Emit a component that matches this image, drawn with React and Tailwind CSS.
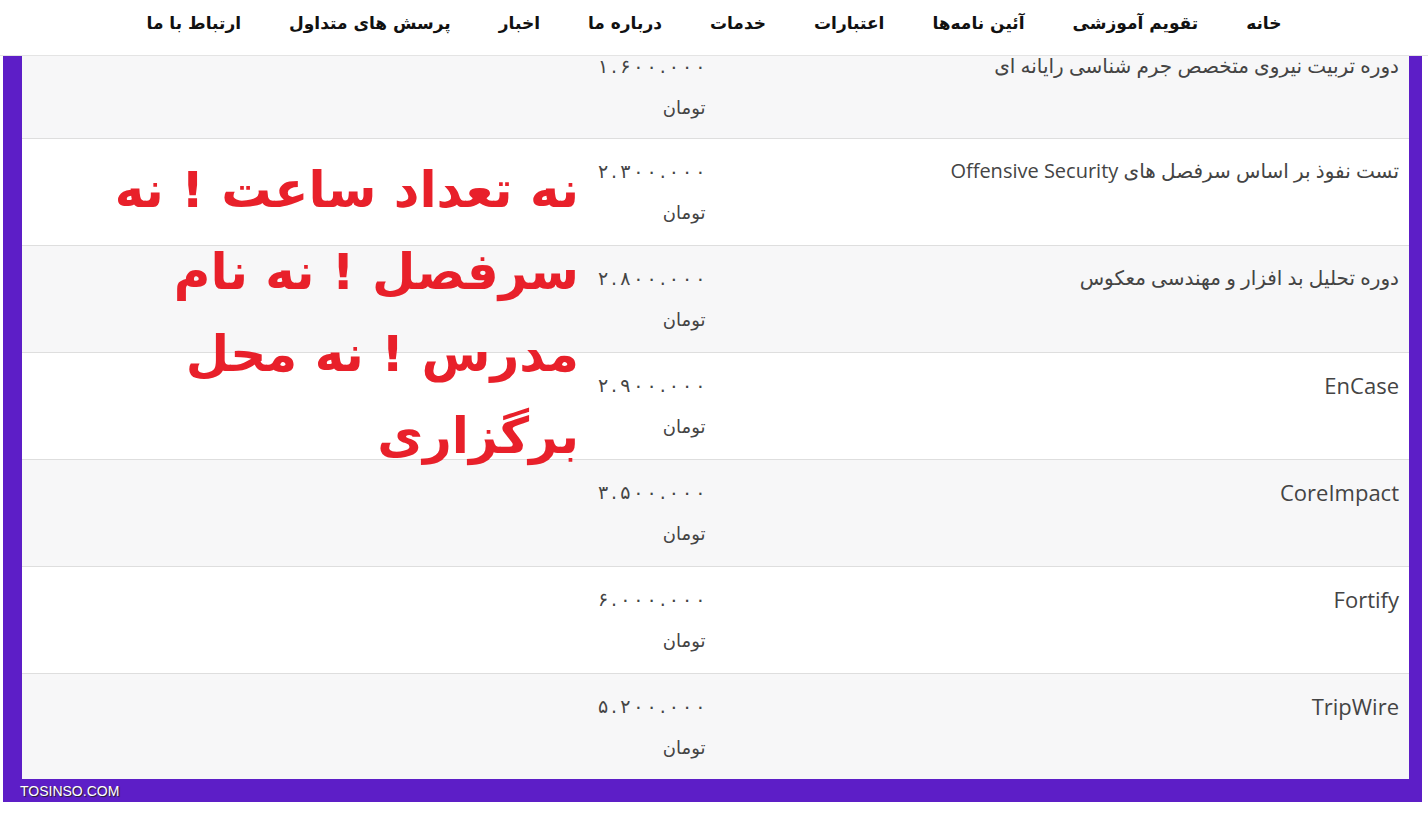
const navItems = [
  'خانه',
  'تقویم آموزشی',
  'آئین نامه‌ها',
  'اعتبارات',
  'خدمات',
  'درباره ما',
  'اخبار',
  'پرسش های متداول',
  'ارتباط با ما',
];

const courses = [
  { name: 'دوره تربیت نیروی متخصص جرم شناسی رایانه ای', price: '۱.۶۰۰.۰۰۰' },
  { name: 'تست نفوذ بر اساس سرفصل های Offensive Security', price: '۲.۳۰۰.۰۰۰' },
  { name: 'دوره تحلیل بد افزار و مهندسی معکوس', price: '۲.۸۰۰.۰۰۰' },
  { name: 'EnCase', price: '۲.۹۰۰.۰۰۰', latin: true },
  { name: 'CoreImpact', price: '۳.۵۰۰.۰۰۰', latin: true },
  { name: 'Fortify', price: '۶.۰۰۰.۰۰۰', latin: true },
  { name: 'TripWire', price: '۵.۲۰۰.۰۰۰', latin: true },
];

function CourseRow({ course, index }) {
  const bg = index % 2 === 0 ? 'bg-[#f7f7f8]' : 'bg-white';
  const height = index === 0 ? 'h-[105px]' : 'h-[107px]';
  return (
    <div className={`flex ${height} border-b border-[#dedede] ${bg}`}>
      <div className="w-1/2 pr-[10px] pt-[18px]">
        <p
          className={
            course.latin
              ? "text-[22px] leading-[28px] text-[#444] font-['Open_Sans',sans-serif]"
              : "text-[20px] leading-[28px] text-[#444] font-['Open_Sans','DejaVu_Sans',sans-serif]"
          }
        >
          {course.name}
        </p>
      </div>
      <div className="w-1/2 pr-[10px] pt-[18px] text-[#444]">
        <p dir="ltr" className="flex justify-end gap-[3px] text-[19px] leading-[28px]">
          {[...course.price].map((ch, i) => (
            <span key={i}>{ch}</span>
          ))}
        </p>
        <p className="text-[18px] mt-[14px] leading-[28px]">تومان</p>
      </div>
    </div>
  );
}

export default function App() {
  return (
    <div dir="rtl" className="w-[1428px] h-[816px] bg-white overflow-hidden font-['DejaVu_Sans',sans-serif]">
      <nav className="h-[56px] border-b border-[#e4e4e4] flex items-center justify-center gap-[48px] pb-[8px]">
        {navItems.map((item) => (
          <a key={item} className="text-[17px] font-bold text-[#111]">
            {item}
          </a>
        ))}
      </nav>

      <div className="mr-[6px] w-[1419px] bg-[#5d1ec7]">
        <div className="relative h-[723px] overflow-hidden mr-[13px] ml-[19px]">
          <div className="-mt-[22px]">
            {courses.map((c, i) => (
              <CourseRow key={c.name} course={c} index={i} />
            ))}
          </div>
          <div className="absolute top-[93px] right-[830px] w-[500px] text-right text-[#e8202a] font-bold text-[50px] leading-[82px]">
            <p>نه تعداد ساعت ! نه</p>
            <p>سرفصل ! نه نام</p>
            <p>مدرس ! نه محل</p>
            <p>برگزاری</p>
          </div>
        </div>
        <div dir="ltr" className="h-[23px] flex items-center pl-[17px]">
          <span className="text-[14px] leading-[14px] text-white font-['Liberation_Sans',sans-serif] [text-shadow:1px_1px_1px_#222]">
            TOSINSO.COM
          </span>
        </div>
      </div>
    </div>
  );
}
